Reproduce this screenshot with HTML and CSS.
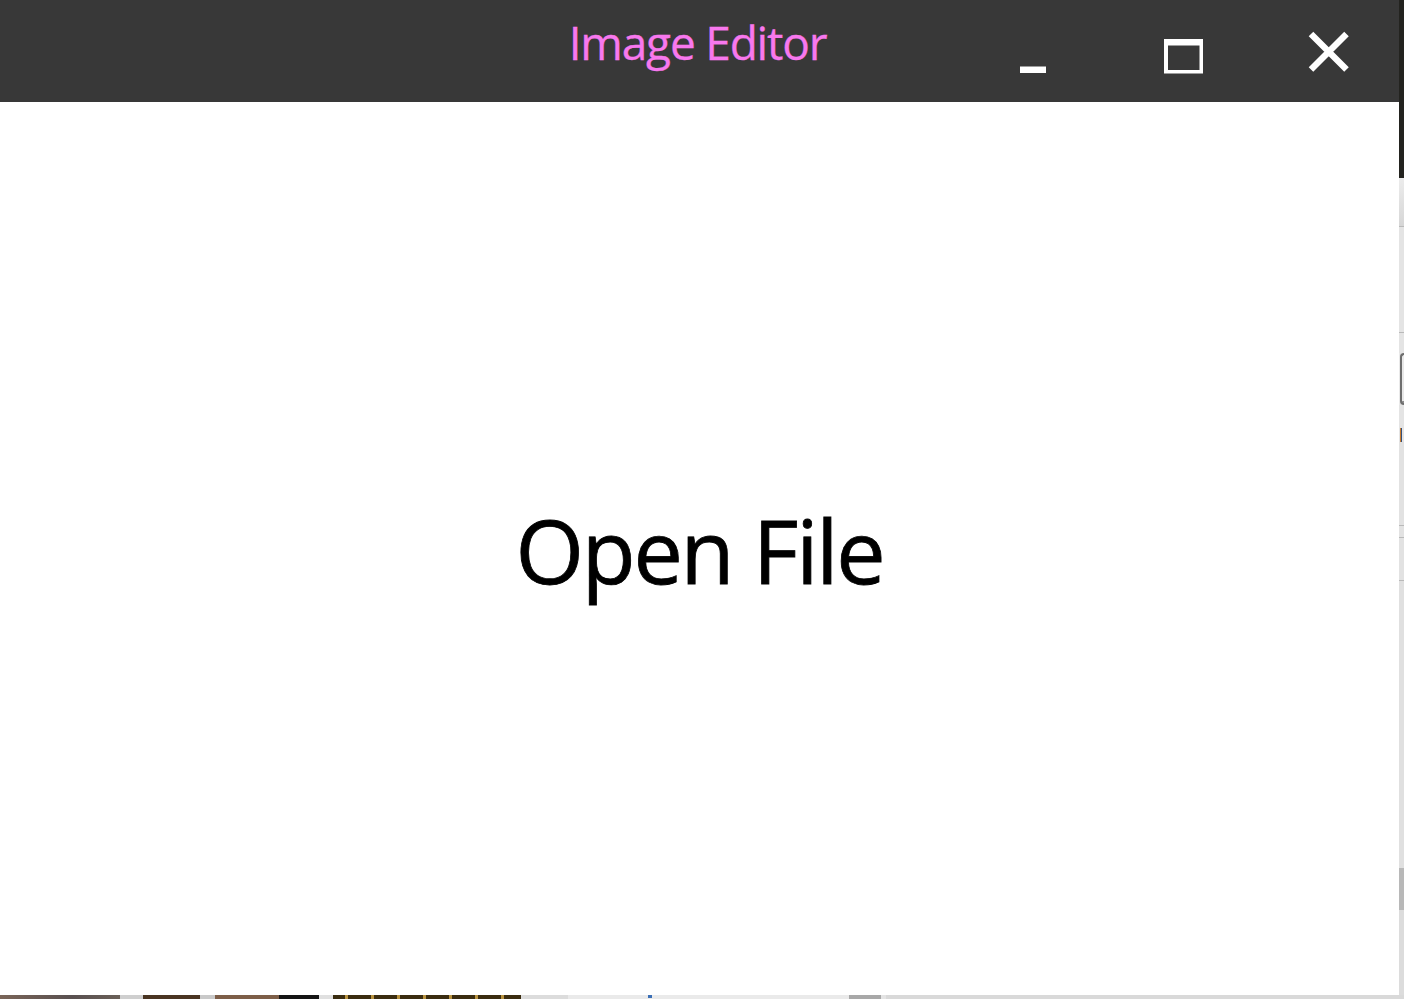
FILE: index.html
```html
<!DOCTYPE html>
<html lang="en">
<head>
<meta charset="utf-8">
<title>Image Editor</title>
<link rel="stylesheet" href="styles.css">
</head>
<body>
<div class="screen">
  <div class="window">
    <header class="titlebar">
      <div class="spacer"></div>
      <h1 class="title">Image Editor</h1>
      <div class="controls">
        <button class="ctl ctl-min" aria-label="Minimize">
          <svg width="150" height="102" viewBox="0 0 150 102"><rect x="62" y="66.5" width="26" height="6.5" fill="#fff"/></svg>
        </button>
        <button class="ctl ctl-max" aria-label="Maximize">
          <svg width="150" height="102" viewBox="0 0 150 102"><path d="M56 39h39v34.5h-39z M60 45.5v24.5h31.5v-24.5z" fill="#fff" fill-rule="evenodd"/></svg>
        </button>
        <button class="ctl ctl-close" aria-label="Close">
          <svg width="141" height="102" viewBox="0 0 141 102"><path d="M53 34L88.5 69.5M88.5 34L53 69.5" stroke="#fff" stroke-width="6.4" fill="none"/></svg>
        </button>
      </div>
    </header>
    <main class="content">
      <div class="open-file">Open File</div>
    </main>
  </div>
  <div class="side">
    <div class="s-dark"></div>
    <div class="s-grad"></div>
    <div class="s-line"></div>
    <div class="s-a"></div>
    <div class="s-line"></div>
    <div class="s-b"></div>
    <div class="s-box"></div>
    <div class="s-c"></div>
    <div class="s-glyph"></div>
    <div class="s-d"></div>
    <div class="s-line"></div>
    <div class="s-e"></div>
    <div class="s-line"></div>
    <div class="s-f"></div>
    <div class="s-line"></div>
    <div class="s-g"></div>
    <div class="s-thumb"></div>
    <div class="s-h"></div>
  </div>
  <div class="bottom">
    <div class="b b1"></div>
    <div class="b b2"></div>
    <div class="b b3"></div>
    <div class="b b4"></div>
    <div class="b b5"></div>
    <div class="b b6"></div>
    <div class="b b7"></div>
    <div class="b b8"></div>
    <div class="b b9"></div>
    <div class="b b10"><span class="b-dot"></span></div>
    <div class="b b11"></div>
    <div class="b b12"></div>
    <div class="b b13"></div>
  </div>
</div>
</body>
</html>
```

FILE: styles.css
```css
html, body {
  margin: 0;
  padding: 0;
  background: #d8d8d8;
  overflow: hidden;
}

.screen {
  display: grid;
  grid-template-columns: 1399px 5px;
  grid-template-rows: 995px 4px;
  width: 1404px;
  height: 999px;
}

.window {
  display: flex;
  flex-direction: column;
  background: #fff;
  min-height: 0;
}

.titlebar {
  display: grid;
  grid-template-columns: 1fr auto 1fr;
  height: 102px;
  background: #383838;
  flex: none;
}

.title {
  margin: 0;
  font-family: "Open Sans", "Liberation Sans", sans-serif;
  font-weight: 400;
  font-size: 46px;
  line-height: 1;
  letter-spacing: -1.2px;
  color: #f878ee;
  padding-top: 19px;
  padding-right: 4px;
  white-space: nowrap;
  -webkit-text-stroke: 0.3px #f878ee;
}

.controls {
  display: flex;
  justify-content: flex-end;
}

.ctl {
  border: 0;
  padding: 0;
  margin: 0;
  background: transparent;
  height: 102px;
  display: block;
  cursor: default;
}

.ctl svg {
  display: block;
}

.ctl-min, .ctl-max { width: 150px; }
.ctl-close { width: 141px; }

.content {
  flex: 1;
  display: flex;
  align-items: center;
  justify-content: center;
  background: #fff;
}

.open-file {
  font-family: "Open Sans", "Liberation Sans", sans-serif;
  font-size: 88px;
  line-height: 1;
  letter-spacing: -2.2px;
  color: #000;
  padding-top: 2px;
  -webkit-text-stroke: 0.8px #000;
}

/* right edge of the desktop behind the window */
.side {
  display: flex;
  flex-direction: column;
  background: #dedede;
  box-shadow: inset 1px 0 0 #e9e9e9;
}
.s-dark { height: 178px; background: #23231f; }
.s-grad { height: 48px; background: linear-gradient(#ececec, #d6d6d6); }
.s-line { height: 1px; background: #b9b9b9; }
.s-a { height: 105px; background: #e4e4e4; }
.s-b { height: 20px; background: #e4e4e4; }
.s-box {
  height: 48px;
  border: 2px solid #6e6e6e;
  border-right: 0;
  border-radius: 6px 0 0 6px;
  margin-left: 1px;
  background: #e8e8e8;
  box-shadow: inset 0 -18px 0 -16px #8a8a8a;
}
.s-c { height: 23px; background: #e4e4e4; }
.s-glyph {
  height: 14px;
  background: linear-gradient(90deg, #e4e4e4 0 1px, #c77b2f 1px 2px, #36507a 2px 3px, #e4e4e4 3px);
}
.s-d { height: 83px; background: #e2e2e2; }
.s-e { height: 11px; background: #e2e2e2; }
.s-f { height: 42px; background: #e2e2e2; }
.s-g { height: 287px; background: #e0e0e0; }
.s-thumb { height: 42px; background: #b8b8b8; }
.s-h { height: 85px; background: #dcdcdc; }

/* bottom edge of the desktop behind the window */
.bottom {
  grid-column: 1 / 3;
  display: flex;
  height: 4px;
}
.b { height: 4px; flex: none; }
.b1 { width: 120px; background: linear-gradient(90deg, #7a6558, #595050 60%, #6a6058); }
.b2 { width: 23px; background: #cfcfcf; }
.b3 { width: 57px; background: #4a3522; }
.b4 { width: 15px; background: #c9c9c9; }
.b5 { width: 64px; background: #7d5e48; }
.b6 { width: 40px; background: #151515; }
.b7 { width: 14px; background: #e0e0e0; }
.b8 { width: 188px; background: repeating-linear-gradient(90deg, #3a2c10 0 12px, #b8923f 12px 15px, #3a2c10 15px 26px); }
.b9 { width: 47px; background: #dcdcdc; }
.b10 { width: 281px; background: #eaeaea; position: relative; }
.b-dot { position: absolute; left: 80px; top: 0; width: 4px; height: 3px; background: #3b6fb6; }
.b11 { width: 32px; background: #a8a8a8; }
.b12 { width: 5px; background: #e4e4e4; }
.b13 { flex: 1; background: #d9d9d9; }
```
